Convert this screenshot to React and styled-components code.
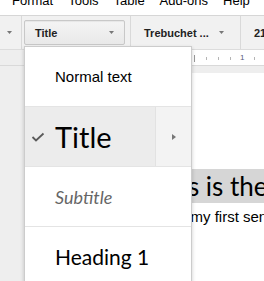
import React from "react";
import styled, { createGlobalStyle } from "styled-components";

const GlobalStyle = createGlobalStyle`
  html, body {
    margin: 0;
    padding: 0;
    background: #ffffff;
  }
  body {
    font-family: Arial, "Liberation Sans", sans-serif;
    overflow: hidden;
  }
`;

const Screen = styled.div`
  position: relative;
  width: 264px;
  height: 281px;
  overflow: hidden;
  background: #eeeeee;
`;

const MenuBar = styled.div`
  height: 15px;
  overflow: hidden;
  background: #ffffff;
`;

const MenuList = styled.div`
  display: flex;
  gap: 15px;
  margin-top: -7px;
  padding-left: 12px;
  font-size: 13px;
  line-height: 15px;
  color: #000;
  white-space: nowrap;
`;

const Toolbar = styled.div`
  display: flex;
  height: 33px;
  background: #f1f1f1;
  border-top: 1px solid #d6d6d6;
  border-bottom: 1px solid #dcdcdc;
`;

const Segment = styled.div`
  display: flex;
  align-items: center;
  justify-content: space-between;
  flex: none;
  width: ${(p) => p.$width}px;
  padding: ${(p) => p.$pad || "0"};
  box-sizing: border-box;
  border-right: ${(p) => (p.$last ? "none" : "1px solid #d9d9d9")};
  font-size: 11px;
  font-weight: bold;
  color: #222;
  white-space: nowrap;
  overflow: hidden;
`;

const StyleButton = styled.div`
  display: flex;
  align-items: center;
  justify-content: space-between;
  width: 101px;
  height: 25px;
  margin-left: 2px;
  padding: 0 10px;
  box-sizing: border-box;
  border: 1px solid #c8c8c8;
  border-radius: 2px;
  background: linear-gradient(#f4f4f4, #e9e9e9);
  box-shadow: inset 0 1px 1px rgba(0, 0, 0, 0.06);
`;

const Ruler = styled.div`
  display: flex;
  height: 15px;
  background: #eeeeee;
  border-bottom: 1px solid #d9d9d9;
`;

const RulerPage = styled.div`
  display: flex;
  align-items: center;
  flex: 1;
  margin-left: 130px;
  padding-left: 64px;
  background: #ffffff;
`;

const TickSlot = styled.div`
  display: flex;
  align-items: center;
  width: 12px;
  height: 15px;
  flex: none;
`;

const Tick = styled.div`
  width: 1px;
  height: ${(p) => (p.$major ? 7 : 3)}px;
  margin-top: ${(p) => (p.$major ? 2 : 1)}px;
  background: ${(p) => (p.$major ? "#9a9a9a" : "#b5b5b5")};
`;

const TickLabel = styled.span`
  margin-left: -2px;
  margin-top: 1px;
  font-size: 8px;
  line-height: 8px;
  color: #5a5a7a;
`;

const Gutter = styled.div`
  height: 7px;
`;

const Page = styled.div`
  margin-left: 130px;
  height: 200px;
  padding: 96px 0 0 13px;
  background: #ffffff;
  white-space: nowrap;
  overflow: hidden;
`;

const DocTitle = styled.div`
  display: inline-block;
  margin-left: 9px;
  font-family: Lato, "Open Sans", sans-serif;
  font-size: 26px;
  line-height: 34px;
  color: #000;
  background: #d6d6d6;
  padding-right: 20px;
`;

const DocText = styled.div`
  margin-top: 5px;
  font-size: 15px;
  line-height: 17px;
  color: #000;
`;

const Dropdown = styled.div`
  position: absolute;
  left: 24px;
  top: 46px;
  width: 168px;
  box-sizing: border-box;
  background: #ffffff;
  border: 1px solid rgba(0, 0, 0, 0.2);
  box-shadow: 0 2px 4px rgba(0, 0, 0, 0.2);
`;

const Item = styled.div`
  display: flex;
  align-items: center;
  height: 59px;
  border-bottom: 1px solid #e4e4e4;
  background: ${(p) => (p.$selected ? "#ececec" : "#ffffff")};
`;

const CheckCell = styled.div`
  display: flex;
  align-items: center;
  width: 30px;
  padding-left: 6px;
  box-sizing: border-box;
  flex: none;
`;

const labelFonts = {
  normal: `font-family: Arial, "Liberation Sans", sans-serif; font-size: 15px; color: #000;`,
  title: `font-family: Lato, "Open Sans", sans-serif; font-size: 29px; color: #000;`,
  subtitle: `font-family: Lato, "Open Sans", sans-serif; font-size: 18px; font-style: italic; color: #666;`,
  heading: `font-family: Lato, "Open Sans", sans-serif; font-size: 21px; color: #000;`,
};

const Label = styled.div`
  flex: 1;
  white-space: nowrap;
  ${(p) => labelFonts[p.$variant]}
`;

const SubCell = styled.div`
  display: flex;
  align-items: center;
  justify-content: center;
  align-self: stretch;
  width: 35px;
  flex: none;
  background: #f3f3f3;
  border-left: 1px solid #e2e2e2;
`;

const DownArrow = () => (
  <svg width="5" height="3" viewBox="0 0 5 3">
    <polygon points="0,0 5,0 2.5,3" fill="#777" />
  </svg>
);

const RightArrow = () => (
  <svg width="4" height="6" viewBox="0 0 4 6">
    <polygon points="0,0 4,3 0,6" fill="#777" />
  </svg>
);

const Check = () => (
  <svg width="14" height="10" viewBox="0 0 14 10">
    <polyline
      points="1.5,5 5,8.5 12.5,1.5"
      fill="none"
      stroke="#5a5a5a"
      strokeWidth="1.8"
    />
  </svg>
);

const menus = ["Format", "Tools", "Table", "Add-ons", "Help"];
const ticks = ["major", "minor", "minor", "minor", "label", "minor", "minor"];
const styles = [
  { id: "normal", text: "Normal text" },
  { id: "title", text: "Title", selected: true },
  { id: "subtitle", text: "Subtitle" },
  { id: "heading", text: "Heading 1" },
];

export default function App() {
  return (
    <Screen>
      <GlobalStyle />
      <MenuBar>
        <MenuList>
          {menus.map((m) => (
            <span key={m}>{m}</span>
          ))}
        </MenuList>
      </MenuBar>

      <Toolbar>
        <Segment $width={22} $pad="0 0 0 7px">
          <DownArrow />
        </Segment>
        <Segment $width={109}>
          <StyleButton>
            <span>Title</span>
            <DownArrow />
          </StyleButton>
        </Segment>
        <Segment $width={110} $pad="0 16px 0 13px">
          <span>Trebuchet ...</span>
          <DownArrow />
        </Segment>
        <Segment $width={30} $pad="0 0 0 13px" $last>
          <span>21</span>
        </Segment>
      </Toolbar>

      <Ruler>
        <RulerPage>
          {ticks.map((t, i) => (
            <TickSlot key={i}>
              {t === "label" ? <TickLabel>1</TickLabel> : <Tick $major={t === "major"} />}
            </TickSlot>
          ))}
        </RulerPage>
      </Ruler>
      <Gutter />

      <Page>
        <DocTitle>This is the title</DocTitle>
        <DocText>This is my first sentence.</DocText>
      </Page>

      <Dropdown>
        {styles.map((s) => (
          <Item key={s.id} $selected={s.selected}>
            <CheckCell>{s.selected && <Check />}</CheckCell>
            <Label $variant={s.id}>{s.text}</Label>
            {s.selected && (
              <SubCell>
                <RightArrow />
              </SubCell>
            )}
          </Item>
        ))}
      </Dropdown>
    </Screen>
  );
}
